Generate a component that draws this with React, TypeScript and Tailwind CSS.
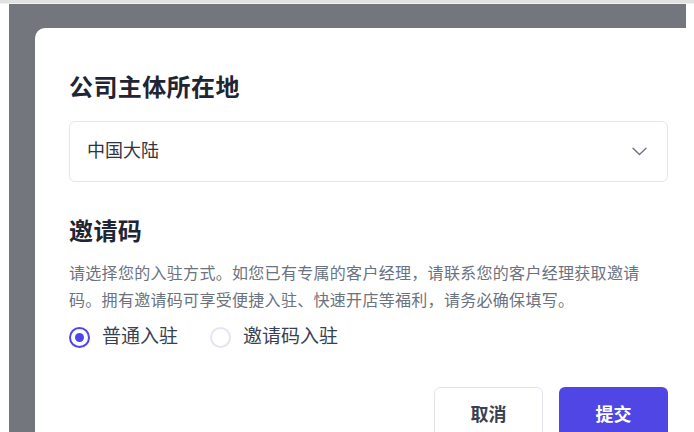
import { useState } from "react";

const font = {
  fontFamily: '"Liberation Sans", "Noto Sans CJK SC", sans-serif',
};

function Radio({ checked, label, onClick }: { checked: boolean; label: string; onClick: () => void }) {
  return (
    <button onClick={onClick} className="flex items-center gap-[12px]">
      <span
        className={`flex h-[21px] w-[21px] items-center justify-center rounded-full border-2 ${
          checked ? "border-[#4f46e5]" : "border-[#e3e6f2]"
        }`}
      >
        {checked && <span className="h-[9px] w-[9px] rounded-full bg-[#4f46e5]" />}
      </span>
      <span className="text-[19px] leading-[28px] text-[#374151]">{label}</span>
    </button>
  );
}

export default function App() {
  const [mode, setMode] = useState("normal");

  return (
    <div className="flex h-[432px] w-[694px] flex-col overflow-hidden bg-white" style={font}>
      <div className="h-[3px] shrink-0 bg-[#e1e1e1]" />
      <div className="h-[1px] shrink-0 bg-[#f1f1f1]" />
      <div className="flex flex-1">
        <div className="w-[9px] shrink-0 bg-white" />
        <div className="w-[677px] shrink-0 bg-[#74767e] pl-[26px] pt-[24px]">
          <div className="h-[420px] w-[700px] rounded-tl-[10px] bg-white pl-[34px] pt-[44px]">
            <div className="w-[599px]">
              <h2 className="text-[24px] font-semibold leading-[32px] tracking-[0.4px] text-[#1f2533]">
                公司主体所在地
              </h2>
              <button className="mt-[17px] flex h-[61px] w-full items-center justify-between rounded-[6px] border border-[#e3e6ef] pl-[17px] pr-[20px]">
                <span className="text-[18px] text-[#2f3542]">中国大陆</span>
                <svg width="15" height="9" viewBox="0 0 15 9" fill="none">
                  <path d="M1 1.2 7.5 7.4 14 1.2" stroke="#6b7280" strokeWidth="1.4" strokeLinecap="round" strokeLinejoin="round" />
                </svg>
              </button>

              <h2 className="mt-[34px] text-[24px] font-semibold leading-[32px] tracking-[0.4px] text-[#1f2533]">邀请码</h2>
              <p className="mt-[12px] text-[16px] leading-[27px] tracking-[0.3px] text-[#6b7280]">
                请选择您的入驻方式。如您已有专属的客户经理，请联系您的客户经理获取邀请码。拥有邀请码可享受便捷入驻、快速开店等福利，请务必确保填写。
              </p>

              <div className="mt-[9px] flex items-center gap-[32px]">
                <Radio checked={mode === "normal"} label="普通入驻" onClick={() => setMode("normal")} />
                <Radio checked={mode === "invite"} label="邀请码入驻" onClick={() => setMode("invite")} />
              </div>

              <div className="mt-[36px] flex justify-end gap-[16px]">
                <button className="h-[56px] w-[109px] rounded-[6px] border border-[#e1e4ee] bg-white text-[18px] font-semibold text-[#374151]">
                  取消
                </button>
                <button className="h-[56px] w-[109px] rounded-[6px] bg-[#4f46e5] text-[18px] font-semibold text-white">
                  提交
                </button>
              </div>
            </div>
          </div>
        </div>
        <div className="flex-1 bg-white" />
      </div>
    </div>
  );
}
